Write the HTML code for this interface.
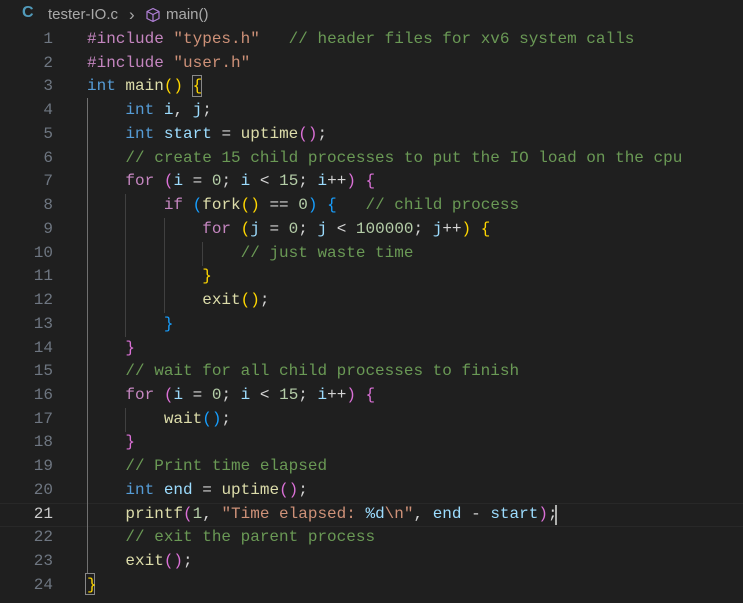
<!DOCTYPE html>
<html><head><meta charset="utf-8"><style>
html,body{margin:0;padding:0;background:#1f1f1f;width:743px;height:603px;overflow:hidden;}
.bc{position:absolute;top:5px;left:0;height:20px;font-family:"Liberation Sans",sans-serif;font-size:15px;color:#a9a9a9;}
.code{position:absolute;left:0;top:28px;font-family:"Liberation Mono",monospace;font-size:16px;line-height:23.74px;white-space:pre;color:#d4d4d4;}
.ln{position:absolute;left:0;width:53px;text-align:right;color:#6e7681;font-family:"Liberation Mono",monospace;font-size:16px;line-height:23.74px;}
.t{position:absolute;left:87px;}
.g{position:absolute;width:1px;background:#404040;}
.k{color:#569cd6}.c{color:#c586c0}.s{color:#ce9178}.m{color:#6a9955}.f{color:#dcdcaa}.v{color:#9cdcfe}.n{color:#b5cea8}
.y{color:#ffd700}.p{color:#da70d6}.b{color:#179fff}
</style></head><body>
<div class="bc">
<span style="position:absolute;left:22px;top:-1px;color:#519aba;font-weight:bold;font-size:16px;">C</span>
<span style="position:absolute;left:48px;top:1px;white-space:nowrap;">tester-IO.c</span>
<span style="position:absolute;left:129px;top:0px;font-size:17px;">›</span>
<svg style="position:absolute;left:145px;top:2px" width="16" height="16" viewBox="0 0 16 16"><path d="M8 1.5 L14 4.5 V11.5 L8 14.5 L2 11.5 V4.5 Z M2 4.5 L8 7.5 L14 4.5 M8 7.5 V14.5" fill="none" stroke="#b180d7" stroke-width="1.2" stroke-linejoin="round"/></svg>
<span style="position:absolute;left:166px;top:1px;">main()</span>
</div>
<div style="position:absolute;left:0;top:503px;width:743px;height:24px;border-top:1px solid #282828;border-bottom:1px solid #282828;box-sizing:border-box"></div>
<div class="g" style="left:87px;top:98px;height:476px;background:#707070"></div>
<div class="g" style="left:125px;top:194px;height:143px"></div>
<div class="g" style="left:125px;top:408px;height:24px"></div>
<div class="g" style="left:164px;top:218px;height:95px"></div>
<div class="g" style="left:202px;top:242px;height:24px"></div>
<div style="position:absolute;left:192px;top:75px;width:10px;height:22px;border:1px solid #888;box-sizing:border-box"></div>
<div style="position:absolute;left:85px;top:573px;width:10px;height:22px;border:1px solid #888;box-sizing:border-box"></div>
<div style="position:absolute;left:555px;top:505px;width:2px;height:20px;background:#aeafad"></div>
<div class="ln" style="top:28px">1<br>2<br>3<br>4<br>5<br>6<br>7<br>8<br>9<br>10<br>11<br>12<br>13<br>14<br>15<br>16<br>17<br>18<br>19<br>20<br><span style="color:#cccccc">21</span><br>22<br>23<br>24</div>
<div class="code"><div class="t"><span class="c">#include</span> <span class="s">"types.h"</span>   <span class="m">// header files for xv6 system calls</span>
<span class="c">#include</span> <span class="s">"user.h"</span>
<span class="k">int</span> <span class="f">main</span><span class="y">()</span> <span class="y">{</span>
    <span class="k">int</span> <span class="v">i</span>, <span class="v">j</span>;
    <span class="k">int</span> <span class="v">start</span> = <span class="f">uptime</span><span class="p">()</span>;
    <span class="m">// create 15 child processes to put the IO load on the cpu</span>
    <span class="c">for</span> <span class="p">(</span><span class="v">i</span> = <span class="n">0</span>; <span class="v">i</span> &lt; <span class="n">15</span>; <span class="v">i</span>++<span class="p">)</span> <span class="p">{</span>
        <span class="c">if</span> <span class="b">(</span><span class="f">fork</span><span class="y">()</span> == <span class="n">0</span><span class="b">)</span> <span class="b">{</span>   <span class="m">// child process</span>
            <span class="c">for</span> <span class="y">(</span><span class="v">j</span> = <span class="n">0</span>; <span class="v">j</span> &lt; <span class="n">100000</span>; <span class="v">j</span>++<span class="y">)</span> <span class="y">{</span>
                <span class="m">// just waste time</span>
            <span class="y">}</span>
            <span class="f">exit</span><span class="y">()</span>;
        <span class="b">}</span>
    <span class="p">}</span>
    <span class="m">// wait for all child processes to finish</span>
    <span class="c">for</span> <span class="p">(</span><span class="v">i</span> = <span class="n">0</span>; <span class="v">i</span> &lt; <span class="n">15</span>; <span class="v">i</span>++<span class="p">)</span> <span class="p">{</span>
        <span class="f">wait</span><span class="b">()</span>;
    <span class="p">}</span>
    <span class="m">// Print time elapsed</span>
    <span class="k">int</span> <span class="v">end</span> = <span class="f">uptime</span><span class="p">()</span>;
    <span class="f">printf</span><span class="p">(</span><span class="n">1</span>, <span class="s">"Time elapsed: </span><span class="v">%d</span><span class="s">\n"</span>, <span class="v">end</span> - <span class="v">start</span><span class="p">)</span>;
    <span class="m">// exit the parent process</span>
    <span class="f">exit</span><span class="p">()</span>;
<span class="y">}</span></div></div>
</body></html>
